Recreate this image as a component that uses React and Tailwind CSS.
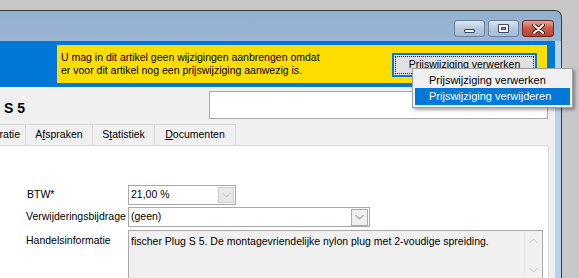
import React from 'react';

const font = { fontFamily: '"Liberation Sans", Arial, sans-serif' };

const Chevron = ({ up = false, color = '#a8a8a8' }) => (
  <svg width="9" height="6" viewBox="0 0 9 6">
    <path d={up ? 'M0.5 5 L4.5 1 L8.5 5' : 'M0.5 1 L4.5 5 L8.5 1'} fill="none" stroke={color} strokeWidth="1" />
  </svg>
);

const CaptionButtons = () => (
  <div className="flex items-start gap-[3px] pt-[9px] pr-[7px]">
    <div className="w-[31px] h-[17px] rounded-[3px] border border-[#6f7f95] bg-gradient-to-b from-[#dbe6f3] via-[#b5c9e0] to-[#a4bcd9] flex items-center justify-center">
      <div className="w-[11px] h-[4px] bg-white border border-[#3c4a5c] rounded-[1px] mt-[4px]" />
    </div>
    <div className="w-[31px] h-[17px] rounded-[3px] border border-[#6f7f95] bg-gradient-to-b from-[#dbe6f3] via-[#b5c9e0] to-[#a4bcd9] flex items-center justify-center">
      <div className="w-[11px] h-[9px] bg-white border border-[#3c4a5c] rounded-[1px] flex items-center justify-center">
        <div className="w-[5px] h-[3px] bg-[#8fa6c2] border border-[#3c4a5c]" />
      </div>
    </div>
    <div className="w-[32px] h-[17px] rounded-[3px] border border-[#6a2a22] bg-gradient-to-b from-[#e8a496] via-[#c75a48] to-[#b8422f] flex items-center justify-center">
      <svg width="13" height="10" viewBox="0 0 13 10">
        <path d="M2 1 L11 9 M11 1 L2 9" stroke="#4a1a14" strokeWidth="4" strokeLinecap="round" />
        <path d="M2 1 L11 9 M11 1 L2 9" stroke="#ffffff" strokeWidth="2" strokeLinecap="round" />
      </svg>
    </div>
  </div>
);

const Tab = ({ children, className = '' }) => (
  <div className={`h-[21px] flex items-center justify-center border border-b-0 border-[#d9d9d9] bg-[#f0f0f0] -ml-px text-[10.5px] text-black ${className}`}>
    {children}
  </div>
);

export default function App() {
  return (
    <div className="w-[579px] h-[278px] overflow-hidden bg-[#c8c8c8] pt-[10px] relative" style={font}>
      {/* window */}
      <div className="w-[562px] h-[268px] rounded-tr-[7px] border-t border-r border-[#3a3a3a] bg-gradient-to-b from-[#93afcf] via-[#b5cde8] to-[#b9d1ea] flex flex-col">
        <div className="h-[30px] flex justify-end shrink-0">
          <CaptionButtons />
        </div>
        <div className="flex-1 flex min-h-0">
          <div className="w-[555px] flex flex-col bg-[#f0f0f0]">
            {/* blue band with notice */}
            <div className="h-[46px] bg-[#0078d7] pl-[57px] pr-[8px] pt-[4px] shrink-0">
              <div className="h-[38px] bg-[#ffdd00] flex items-start justify-between pr-[10px]">
                <div className="pl-[4px] pt-[6px] text-[10.5px] leading-[13px] text-black whitespace-nowrap">
                  <div>U mag in dit artikel geen wijzigingen aanbrengen omdat</div>
                  <div>er voor dit artikel nog een prijswijziging aanwezig is.</div>
                </div>
                <div className="mt-[8px] w-[145px] h-[24px] border-2 border-[#0078d7] bg-[#e1e1e1] p-[1px]">
                  <div className="h-full border border-dotted border-black flex items-center justify-center text-[10.5px] text-black">
                    Prijswijziging verwerken
                  </div>
                </div>
              </div>
            </div>

            {/* title row */}
            <div className="h-[37px] flex items-start shrink-0">
              <div className="w-[25px] overflow-hidden flex justify-end mt-[14px]">
                <span className="whitespace-nowrap font-bold text-[14px] leading-[14px] text-black">S S 5</span>
              </div>
              <div className="ml-[184px] mt-[4px] w-[339px] h-[28px] bg-white border border-[#a8a8a8]" />
            </div>

            {/* tabs */}
            <div className="flex h-[21px] shrink-0">
              <Tab className="w-[28px] ml-[-2px] justify-end pr-[5px]">ratie</Tab>
              <Tab className="w-[68px]"><span>A<u>f</u>spraken</span></Tab>
              <Tab className="w-[63px]"><span>S<u>t</u>atistiek</span></Tab>
              <Tab className="w-[82px]"><span><u>D</u>ocumenten</span></Tab>
            </div>

            {/* panel */}
            <div className="flex-1 w-[549px] bg-white border-t border-r border-[#d9d9d9] pt-[39px] text-[10.5px] text-black">
              <div className="grid grid-cols-[102px_auto] gap-y-[2px] pl-[26px]">
                <div className="h-[20px] flex items-center pl-[1px]">BTW*</div>
                <div className="w-[108px] h-[20px] border border-[#a8a8a8] bg-white flex items-center justify-between pl-[2px] pr-[1px]">
                  <span>21,00 %</span>
                  <div className="w-[16px] h-[16px] bg-[#e8e8e8] border border-[#cfcfcf] flex items-center justify-center">
                    <Chevron color="#c0c0c0" />
                  </div>
                </div>

                <div className="h-[20px] flex items-center">Verwijderingsbijdrage</div>
                <div className="w-[242px] h-[20px] border border-[#a8a8a8] bg-white flex items-center justify-between pl-[2px] pr-[1px]">
                  <span>(geen)</span>
                  <div className="w-[17px] h-[17px] bg-[#f0f0f0] border border-[#acacac] flex items-center justify-center">
                    <Chevron color="#808080" />
                  </div>
                </div>

                <div className="pt-[3px] mt-[1px]">Handelsinformatie</div>
                <div className="mt-[1px] w-[415px] h-[51px] border border-[#a8a8a8] bg-[#f0f0f0] flex">
                  <div className="flex-1 pl-[2px] pt-[3px] whitespace-nowrap">
                    fischer Plug S 5. De montagevriendelijke nylon plug met 2-voudige spreiding.
                  </div>
                  <div className="w-[18px] border-l border-[#e6e6e6] flex flex-col justify-between items-center py-[7px]">
                    <Chevron up color="#c4c4c4" />
                    <Chevron color="#c4c4c4" />
                  </div>
                </div>
              </div>
            </div>
          </div>
          <div className="flex-1 bg-[#b9d1ea]" />
        </div>
      </div>

      {/* context menu */}
      <div className="absolute left-[412px] top-[68px] w-[161px] h-[40px] bg-[#f0f0f0] border border-[#a0a0a0] shadow-[2px_2px_3px_rgba(0,0,0,0.35)] p-[2px] text-[11px] text-black">
        <div className="h-[17px] flex items-center pl-[14px] pt-[1px]">Prijswijziging verwerken</div>
        <div className="h-[17px] flex items-center pl-[14px] bg-[#0078d7] text-white">Prijswijziging verwijderen</div>
      </div>
    </div>
  );
}
